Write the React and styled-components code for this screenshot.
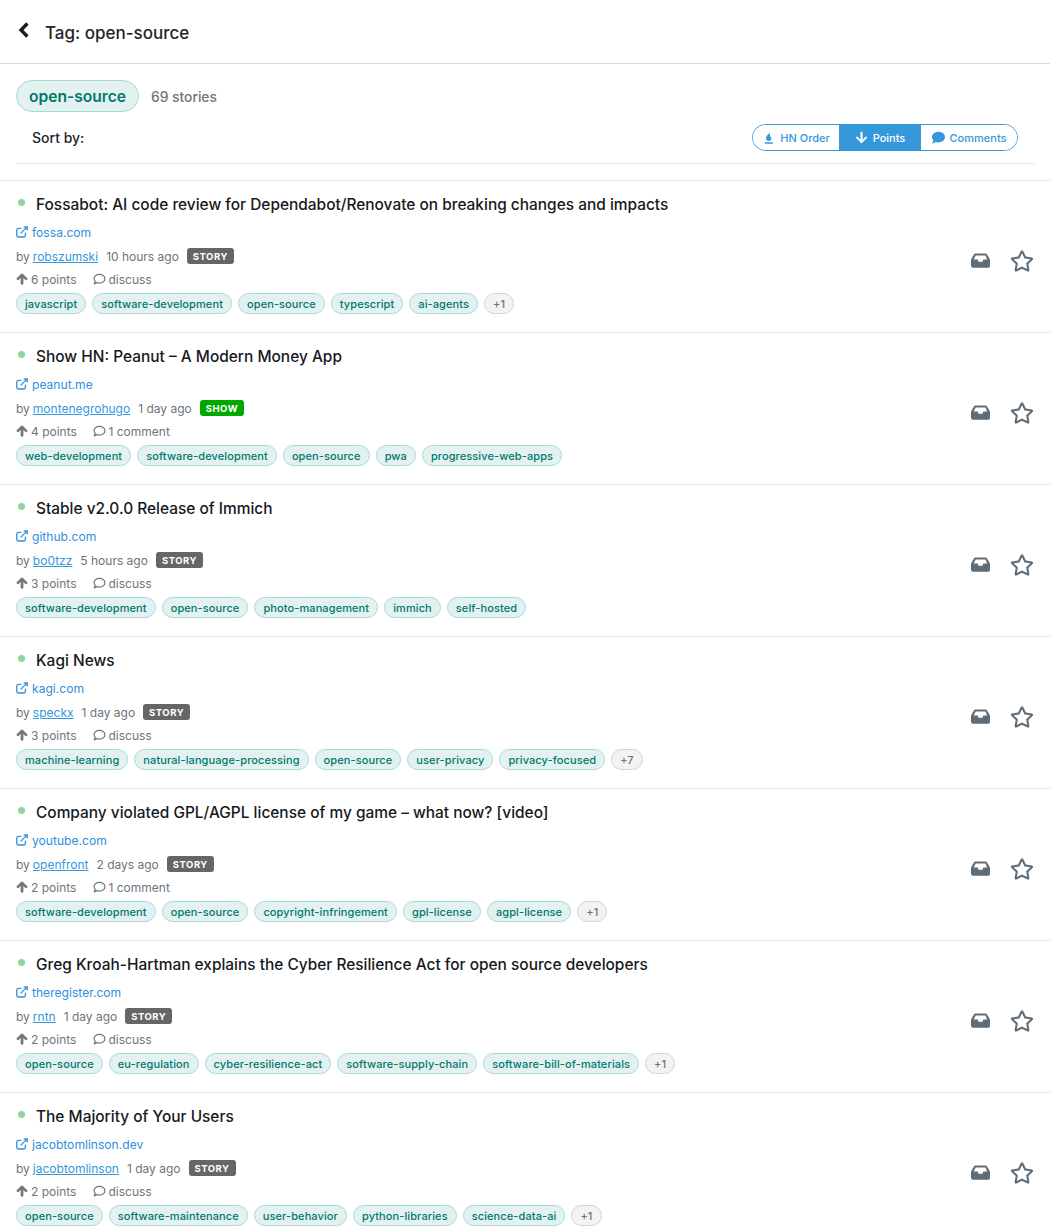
import React from "react";
import styled, { createGlobalStyle } from "styled-components";
import { FaArrowUp, FaArrowDown, FaComment, FaRegComment, FaRegStar } from "react-icons/fa";

const GlobalStyle = createGlobalStyle`
  html, body {
    margin: 0;
    height: 1231px;
    overflow: hidden;
    background: #fff;
    font-family: Inter, "Liberation Sans", sans-serif;
    color: #212529;
  }
  * { box-sizing: border-box; }
`;

const Header = styled.div`
  height: 64px;
  display: flex;
  align-items: center;
  padding: 2px 0 0 18px;
  border-bottom: 1px solid #d9d9d9;
  font-size: 17px;
  font-weight: 500;
`;

const BackSvg = styled.svg`
  width: 11px;
  height: 16px;
  margin-right: 16px;
  margin-top: -5px;
  color: #1a1d20;
`;

const TagInfo = styled.div`
  display: flex;
  align-items: center;
  padding: 16px 16px 0;
`;

const TagPill = styled.div`
  height: 32px;
  width: 123px;
  display: flex;
  align-items: center;
  justify-content: center;
  border-radius: 16px;
  border: 1px solid #a5dbd5;
  background: #e3f2f1;
  color: #00796b;
  font-size: 15.6px;
  font-weight: 600;
`;

const Count = styled.div`
  margin: 1px 0 0 12px;
  font-size: 13.8px;
  font-weight: 500;
  color: #6c757d;
`;

const SortRow = styled.div`
  margin: 13px 16px 0;
  height: 39px;
  padding: 0 16px 13px;
  display: flex;
  align-items: center;
  justify-content: space-between;
  border-bottom: 1px solid #e3e6ea;
  font-size: 14px;
  font-weight: 500;
`;

const SortGroup = styled.div`
  display: flex;
  height: 27px;
  border: 1px solid #3498db;
  border-radius: 14px;
  overflow: hidden;
`;

const SortButton = styled.div`
  display: flex;
  align-items: center;
  justify-content: center;
  gap: 5px;
  width: ${({ $w }) => $w}px;
  font-size: 11px;
  font-weight: 500;
  background: ${({ $active }) => ($active ? "#3498db" : "#fff")};
  color: ${({ $active }) => ($active ? "#fff" : "#3498db")};
  svg { width: 13px; height: 13px; }
`;

const List = styled.div`
  margin-top: 16px;
  border-top: 1px solid #e3e6ea;
`;

const Item = styled.div`
  height: 152px;
  padding: 14px 16px 0;
  display: flex;
  justify-content: space-between;
  border-bottom: 1px solid #e3e6ea;
`;

const Content = styled.div`
  display: flex;
  flex-direction: column;
`;

const TitleRow = styled.div`
  display: flex;
  align-items: center;
  height: 18px;
  font-size: 15.45px;
  font-weight: 500;
  color: #16191c;
`;

const Dot = styled.span`
  width: 7px;
  height: 7px;
  border-radius: 50%;
  background: #8fd49a;
  margin: -3px 11px 0 2px;
`;

const Domain = styled.a`
  display: flex;
  align-items: center;
  gap: 4px;
  margin-top: 11px;
  height: 16px;
  font-size: 12.1px;
  font-weight: 400;
  color: #2f8fdc;
`;

const Meta = styled.div`
  display: flex;
  align-items: center;
  margin-top: 8px;
  height: 16px;
  font-size: 12px;
  color: #6c757d;
`;

const Author = styled.a`
  margin: 0 8px 0 3px;
  color: #3498db;
  text-decoration: underline;
`;

const Badge = styled.span`
  margin-left: 8px;
  height: 16px;
  padding: 0 6px;
  display: flex;
  align-items: center;
  border-radius: 3px;
  font-size: 9.5px;
  font-weight: 700;
  letter-spacing: 0.5px;
  color: #fff;
  background: ${({ $kind }) => ($kind === "SHOW" ? "#00a800" : "#666")};
`;

const Stats = styled.div`
  display: flex;
  align-items: center;
  margin-top: 7px;
  height: 16px;
  font-size: 12px;
  color: #6c757d;
`;

const PointsStat = styled.span`
  display: flex;
  align-items: center;
  gap: 3px;
  width: 77px;
  svg { width: 12px; height: 12px; stroke: currentColor; stroke-width: 40; }
`;

const TalkStat = styled.span`
  display: flex;
  align-items: center;
  gap: 2.5px;
  svg { width: 13px; height: 12px; }
`;

const Tags = styled.div`
  display: flex;
  gap: 6px;
  margin-top: 6px;
`;

const Tag = styled.span`
  height: 21px;
  padding: 0 8px;
  display: flex;
  align-items: center;
  border-radius: 11px;
  font-size: 11px;
  font-weight: 500;
  letter-spacing: 0.1px;
  border: 1px solid ${({ $more }) => ($more ? "#d4d4d4" : "#a5dbd5")};
  background: ${({ $more }) => ($more ? "#f3f3f3" : "#e3f2f1")};
  color: ${({ $more }) => ($more ? "#6c757d" : "#00796b")};
`;

const Actions = styled.div`
  display: flex;
  align-items: center;
  gap: 20px;
  color: #5f6b75;
  margin-top: -6px;
`;

const TraySvg = styled.svg`
  width: 19px;
  height: 15px;
  margin-top: -1px;
`;

const StarIcon = styled(FaRegStar)`
  width: 24px;
  height: 22px;
`;

const BackIcon = () => (
  <BackSvg viewBox="0 0 11 16" fill="none" stroke="currentColor" strokeWidth="3.4">
    <path d="M9.400 1.500 3 8l6.400 6.500" />
  </BackSvg>
);

const TrayIcon = () => (
  <TraySvg viewBox="0 0 20 15" fill="currentColor">
    <path
      fillRule="evenodd"
      d="M4.500 0h11c.6 0 1 .3 1.300.8L20 6.800V13a2 2 0 0 1-2 2H2a2 2 0 0 1-2-2V6.800L3.200.8C3.500.3 3.900 0 4.500 0zM4.800 2.300 3 6.500h4l1 2.200h4l1-2.200h4l-1.800-4.200z"
    />
  </TraySvg>
);

const LinkIcon = () => (
  <svg width="12" height="12" viewBox="0 0 12 12" fill="none" stroke="currentColor" strokeWidth="1.3">
    <path d="M9.400 6.800v2.600a1.600 1.600 0 0 1-1.600 1.600H2.400A1.600 1.600 0 0 1 .8 9.400V4a1.600 1.600 0 0 1 1.600-1.600h3" />
    <path d="M4.600 7.400 11 1M7.600.8h3.600v3.600" />
  </svg>
);

const FlameIcon = () => (
  <svg viewBox="0 0 12 12" fill="currentColor">
    <path d="M7.300 0c.3 1.500-.9 2.300-1.800 3.300C4.500 4.400 3.700 5.400 3.700 6.700c0 1.500 1.100 2.600 2.500 2.600 1.500 0 2.500-1 2.500-2.500 0-.8-.3-1.300-.8-1.700.1.500 0 1-.4 1.200.3-1.300-.1-2.200-.4-3.300C6.900 2 7.600 1 7.300 0z" />
    <rect x="2.500" y="10.400" width="7.500" height="1.400" rx=".5" />
  </svg>
);

const stories = [
  {
    title: "Fossabot: AI code review for Dependabot/Renovate on breaking changes and impacts",
    domain: "fossa.com", by: "robszumski", age: "10 hours ago", kind: "STORY", points: "6 points", talk: "discuss",
    tags: ["javascript", "software-development", "open-source", "typescript", "ai-agents"], more: "+1",
  },
  {
    title: "Show HN: Peanut – A Modern Money App",
    domain: "peanut.me", by: "montenegrohugo", age: "1 day ago", kind: "SHOW", points: "4 points", talk: "1 comment",
    tags: ["web-development", "software-development", "open-source", "pwa", "progressive-web-apps"],
  },
  {
    title: "Stable v2.0.0 Release of Immich",
    domain: "github.com", by: "bo0tzz", age: "5 hours ago", kind: "STORY", points: "3 points", talk: "discuss",
    tags: ["software-development", "open-source", "photo-management", "immich", "self-hosted"],
  },
  {
    title: "Kagi News",
    domain: "kagi.com", by: "speckx", age: "1 day ago", kind: "STORY", points: "3 points", talk: "discuss",
    tags: ["machine-learning", "natural-language-processing", "open-source", "user-privacy", "privacy-focused"], more: "+7",
  },
  {
    title: "Company violated GPL/AGPL license of my game – what now? [video]",
    domain: "youtube.com", by: "openfront", age: "2 days ago", kind: "STORY", points: "2 points", talk: "1 comment",
    tags: ["software-development", "open-source", "copyright-infringement", "gpl-license", "agpl-license"], more: "+1",
  },
  {
    title: "Greg Kroah-Hartman explains the Cyber Resilience Act for open source developers",
    domain: "theregister.com", by: "rntn", age: "1 day ago", kind: "STORY", points: "2 points", talk: "discuss",
    tags: ["open-source", "eu-regulation", "cyber-resilience-act", "software-supply-chain", "software-bill-of-materials"], more: "+1",
  },
  {
    title: "The Majority of Your Users",
    domain: "jacobtomlinson.dev", by: "jacobtomlinson", age: "1 day ago", kind: "STORY", points: "2 points", talk: "discuss",
    tags: ["open-source", "software-maintenance", "user-behavior", "python-libraries", "science-data-ai"], more: "+1",
  },
];

const App = () => (
  <>
    <GlobalStyle />
    <Header>
      <BackIcon />
      Tag: open-source
    </Header>
    <TagInfo>
      <TagPill>open-source</TagPill>
      <Count>69 stories</Count>
    </TagInfo>
    <SortRow>
      Sort by:
      <SortGroup>
        <SortButton $w={86}><FlameIcon />HN Order</SortButton>
        <SortButton $w={82} $active><FaArrowDown />Points</SortButton>
        <SortButton $w={96}><FaComment />Comments</SortButton>
      </SortGroup>
    </SortRow>
    <List>
      {stories.map((s) => (
        <Item key={s.title}>
          <Content>
            <TitleRow><Dot />{s.title}</TitleRow>
            <Domain><LinkIcon />{s.domain}</Domain>
            <Meta>
              by <Author>{s.by}</Author> {s.age}
              <Badge $kind={s.kind}>{s.kind}</Badge>
            </Meta>
            <Stats>
              <PointsStat><FaArrowUp />{s.points}</PointsStat>
              <TalkStat><FaRegComment />{s.talk}</TalkStat>
            </Stats>
            <Tags>
              {s.tags.map((t) => <Tag key={t}>{t}</Tag>)}
              {s.more && <Tag $more>{s.more}</Tag>}
            </Tags>
          </Content>
          <Actions>
            <TrayIcon />
            <StarIcon />
          </Actions>
        </Item>
      ))}
    </List>
  </>
);

export default App;
